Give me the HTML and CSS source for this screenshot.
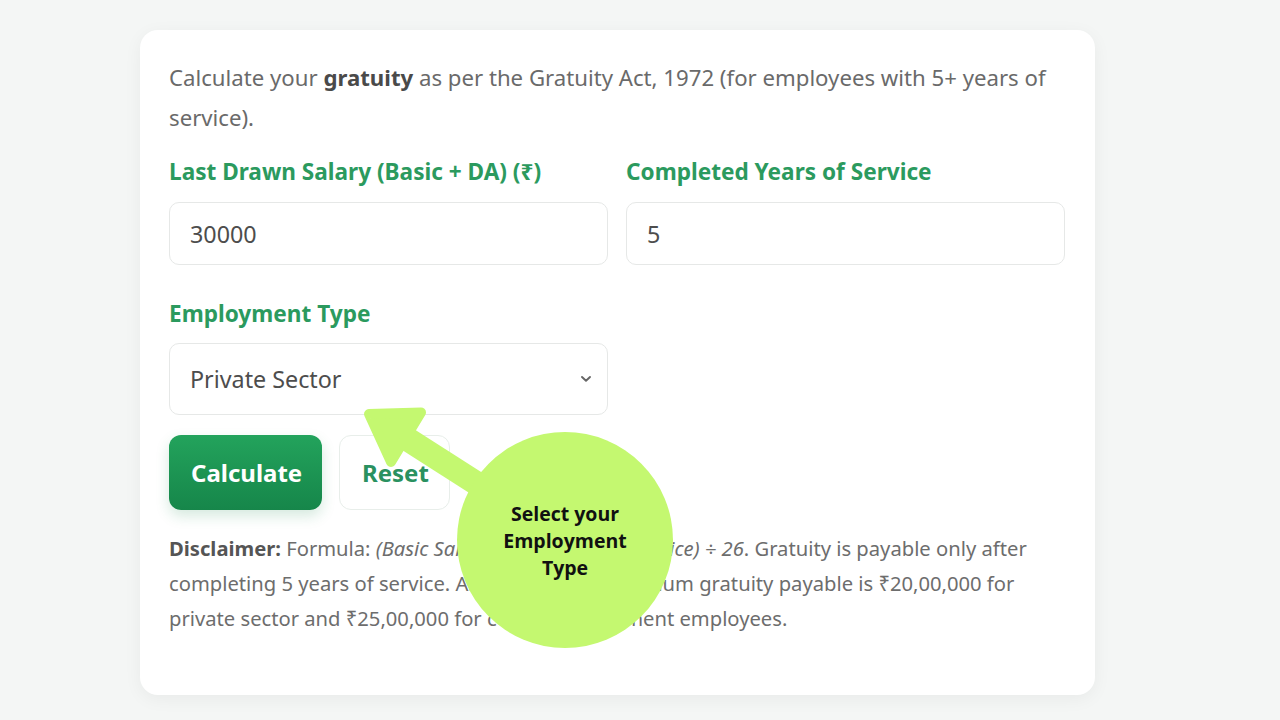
FILE: index.html
```html
<!DOCTYPE html>
<html lang="en">
<head>
<meta charset="utf-8">
<title>Gratuity Calculator</title>
<link rel="stylesheet" href="styles.css">
</head>
<body>
<div class="page">
  <div class="card">
    <p class="intro">Calculate your <strong>gratuity</strong> as per the Gratuity Act, 1972 (for employees with 5+ years of service).</p>
    <div class="grid">
      <div class="field">
        <label class="label">Last Drawn Salary (Basic + DA) (₹)</label>
        <div class="input">30000</div>
      </div>
      <div class="field">
        <label class="label">Completed Years of Service</label>
        <div class="input">5</div>
      </div>
      <div class="field field-select">
        <label class="label">Employment Type</label>
        <div class="select">
          <span>Private Sector</span>
          <svg class="chev" width="12" height="8" viewBox="0 0 12 8"><path d="M2 2 L6 5.8 L10 2" fill="none" stroke="#666" stroke-width="1.9" stroke-linecap="round" stroke-linejoin="round"/></svg>
        </div>
      </div>
    </div>
    <div class="buttons">
      <button class="btn btn-primary">Calculate</button>
      <button class="btn btn-secondary">Reset</button>
    </div>
    <p class="disclaimer"><strong>Disclaimer:</strong> Formula: <em>(Basic Salary × 15 × Years of Service) ÷ 26</em>. Gratuity is payable only after completing 5 years of service. As per the Act, maximum gratuity payable is ₹20,00,000 for private sector and ₹25,00,000 for central government employees.</p>
  </div>
  <svg class="overlay" width="1280" height="720" viewBox="0 0 1280 720">
    <polygon points="411.9,427.8 506.2,488.1 493.2,508.3 398.9,448" fill="#c4f870"/>
    <polygon points="369,414 421,412.5 391,462" fill="#c4f870" stroke="#c4f870" stroke-width="10" stroke-linejoin="round"/>
    <circle cx="565" cy="540" r="108" fill="#c4f870"/>
  </svg>
  <div class="callout">Select your<br>Employment<br>Type</div>
</div>
</body>
</html>
```

FILE: styles.css
```css
html, body {
  margin: 0;
  padding: 0;
}
body {
  background: #f4f6f5;
  font-family: "Noto Sans", "Open Sans", sans-serif;
}
.page {
  position: relative;
  width: 1280px;
  height: 720px;
  overflow: hidden;
  padding-top: 30px;
  box-sizing: border-box;
}
.card {
  margin-left: 140px;
  width: 955px;
  height: 665px;
  box-sizing: border-box;
  background: #ffffff;
  border-radius: 18px;
  box-shadow: 0 4px 18px rgba(0, 0, 0, 0.05);
  padding: 28px 29px;
}
.intro {
  margin: 0;
  font-size: 22.2px;
  line-height: 40px;
  color: #6a6a6a;
}
.intro strong {
  color: #4a4a4a;
  font-weight: 700;
}
.grid {
  margin-top: 19px;
  display: grid;
  grid-template-columns: 439px 439px;
  column-gap: 18px;
  row-gap: 34px;
}
.field {
  display: flex;
  flex-direction: column;
}
.label {
  font-size: 22.6px;
  line-height: 30px;
  font-weight: 700;
  color: #2b9a5e;
}
.input, .select {
  margin-top: 15px;
  height: 63px;
  box-sizing: border-box;
  border: 1px solid #e6e8e7;
  border-radius: 10px;
  padding: 0 20px;
  display: flex;
  align-items: center;
  font-size: 23.3px;
  color: #4d4d4d;
}
.select {
  margin-top: 14px;
  height: 72px;
  padding-right: 15px;
  justify-content: space-between;
}
.buttons {
  margin-top: 20px;
  display: flex;
  gap: 17px;
}
.btn {
  height: 75px;
  border-radius: 12px;
  font-family: "Noto Sans", "Open Sans", sans-serif;
  font-size: 24px;
  font-weight: 700;
  padding: 0 22px;
  cursor: pointer;
}
.btn-primary {
  width: 153px;
  border: none;
  color: #ffffff;
  background: linear-gradient(180deg, #23a35c 0%, #16864a 100%);
  box-shadow: 0 6px 14px rgba(22, 134, 74, 0.18);
}
.btn-secondary {
  width: 111px;
  background: #ffffff;
  border: 1px solid #e8eeea;
  color: #2a9160;
}
.disclaimer {
  margin: 21px 0 0;
  font-size: 20.2px;
  line-height: 35px;
  color: #6d6d6d;
}
.disclaimer strong {
  color: #555555;
}
.overlay {
  position: absolute;
  left: 0;
  top: 0;
  pointer-events: none;
}
.callout {
  position: absolute;
  left: 457px;
  top: 500px;
  width: 216px;
  text-align: center;
  font-family: "Open Sans", sans-serif;
  font-weight: 700;
  font-size: 19.5px;
  line-height: 27px;
  color: #111111;
}
```
